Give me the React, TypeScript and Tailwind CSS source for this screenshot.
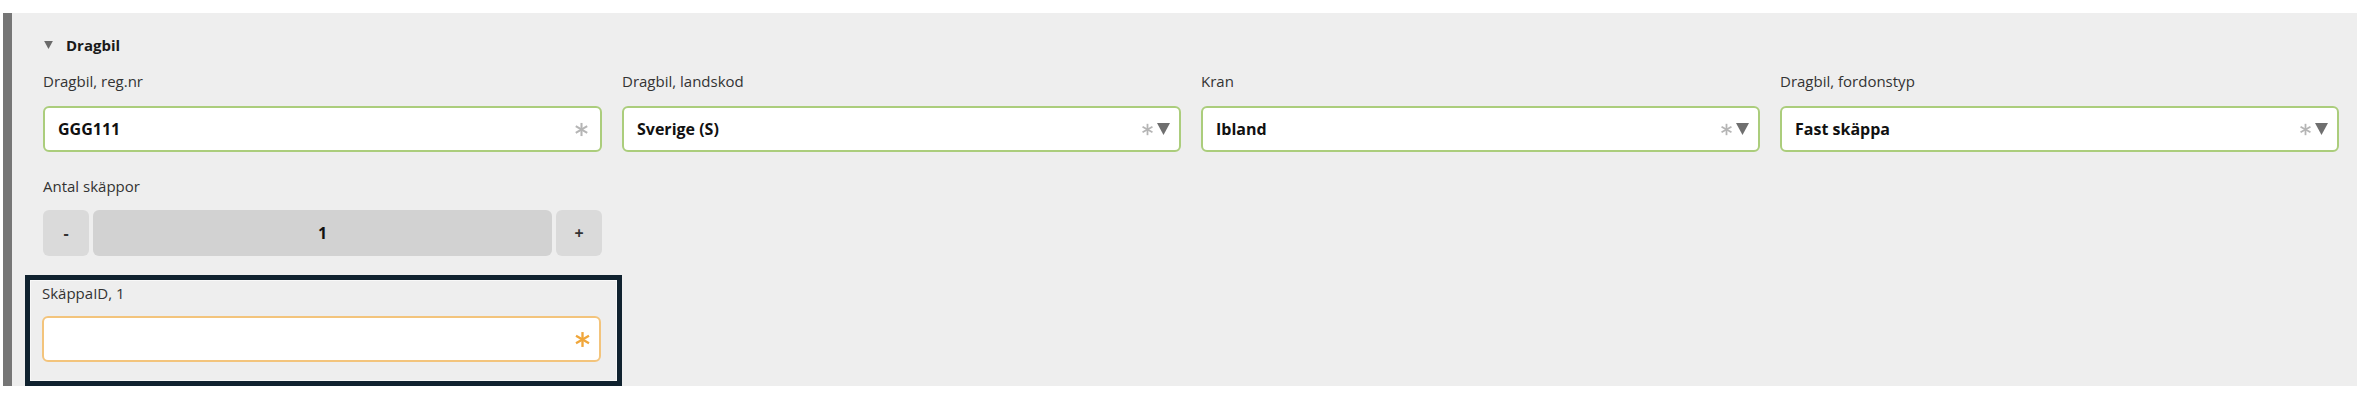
import React from "react";

const font = { fontFamily: '"Open Sans", "Liberation Sans", sans-serif' };

function Asterisk({ className }: { className?: string }) {
  return (
    <svg viewBox="0 0 16 16" className={className} fill="none" stroke="currentColor" strokeWidth="2.2" strokeLinecap="butt">
      <line x1="8" y1="1" x2="8" y2="15" />
      <line x1="1.9" y1="4.5" x2="14.1" y2="11.5" />
      <line x1="1.9" y1="11.5" x2="14.1" y2="4.5" />
    </svg>
  );
}

function Caret({ className }: { className?: string }) {
  return (
    <svg viewBox="0 0 12 11" className={className} fill="currentColor">
      <path d="M0 0 H12 L6 11 Z" />
    </svg>
  );
}

type Field = { label: string; value: string; select?: boolean };

const fields: Field[] = [
  { label: "Dragbil, reg.nr", value: "GGG111" },
  { label: "Dragbil, landskod", value: "Sverige (S)", select: true },
  { label: "Kran", value: "Ibland", select: true },
  { label: "Dragbil, fordonstyp", value: "Fast skäppa", select: true },
];

function InputField({ field }: { field: Field }) {
  return (
    <div>
      <div className="h-[18px] text-[15px] leading-[18px] text-[#333]">{field.label}</div>
      <div className="mt-[16px] h-[46px] flex items-center bg-white border-2 border-[#abcd7c] rounded-[6px] pl-[13px] pr-[9px]">
        <span className="flex-1 text-[16px] font-bold text-[#111]">{field.value}</span>
        <Asterisk className={field.select ? "w-[13px] h-[13px] text-[#b5b5b5]" : "w-[15px] h-[15px] mr-[2px] text-[#b5b5b5]"} />
        {field.select && <Caret className="w-[13px] h-[12px] ml-[3px] text-[#6f6f6f]" />}
      </div>
    </div>
  );
}

export default function App() {
  return (
    <div className="w-full h-[402px] bg-white pt-[13px] pl-[3px] pr-[1px]" style={font}>
      <div className="flex h-[373px]">
        <div className="w-[9px] bg-[#767676]" />
        <div className="flex-1 bg-[#eeeeee] pl-[31px] pr-[18px] pt-[22px]">
          {/* section header */}
          <div className="h-[20px] flex items-center">
            <Caret className="w-[11px] h-[8px] text-[#6a6a6a]" />
            <span className="ml-[12px] text-[15px] font-bold text-[#1a1a1a]">Dragbil</span>
          </div>

          <div className="mt-[17px] grid grid-cols-4 gap-x-[20px]">
            {fields.map((f) => (
              <InputField key={f.label} field={f} />
            ))}
          </div>

          {/* stepper */}
          <div className="mt-[25px] w-[559px]">
            <div className="h-[18px] text-[15px] leading-[18px] text-[#333]">Antal skäppor</div>
            <div className="mt-[15px] h-[46px] flex gap-[4px]">
              <div className="w-[46px] rounded-[6px] bg-[#dadada] flex items-center justify-center text-[16px] font-bold text-[#333]">-</div>
              <div className="flex-1 rounded-[6px] bg-[#d2d2d2] flex items-center justify-center text-[16px] font-bold text-[#111]">1</div>
              <div className="w-[46px] rounded-[6px] bg-[#dadada] flex items-center justify-center text-[16px] font-bold text-[#333]">+</div>
            </div>
          </div>

          {/* focused field */}
          <div className="mt-[19px] -ml-[18px] w-[597px] border-[5px] border-[#10222f] shadow-[inset_0_0_0_1px_#f8f8f8] pl-[12px] pr-[16px] pt-[4px] pb-[19px]">
            <div className="h-[18px] text-[15px] leading-[18px] text-[#333]">SkäppaID, 1</div>
            <div className="mt-[14px] h-[46px] flex items-center justify-end bg-white border-2 border-[#f3c47c] rounded-[6px] pr-[8px]">
              <Asterisk className="w-[17px] h-[17px] text-[#f0a63a]" />
            </div>
          </div>
        </div>
      </div>
    </div>
  );
}
